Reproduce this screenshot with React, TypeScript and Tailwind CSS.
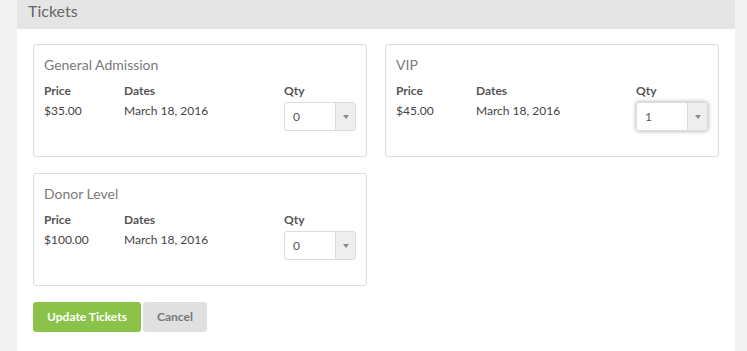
import React from "react";

type Ticket = { name: string; price: string; date: string; qty: string; focused?: boolean };

const Select = ({ value, focused }: { value: string; focused?: boolean }) => (
  <div
    className={
      "flex h-[29px] w-[72px] overflow-hidden rounded-[3px] border border-[#dcdcdc] bg-white " +
      (focused ? "shadow-[0_0_4px_rgba(0,0,0,0.35)]" : "")
    }
  >
    <div className="flex flex-1 items-center pl-[8px] pt-[1px] text-[12px] leading-4 text-[#555]">{value}</div>
    <div className="flex w-[20px] items-center justify-center border-l border-[#dcdcdc] bg-[#eeeeee]">
      <svg width="6" height="4" viewBox="0 0 6 4">
        <path d="M0 0 L6 0 L3 4 Z" fill="#8a8a8a" />
      </svg>
    </div>
  </div>
);

const Card = ({ t }: { t: Ticket }) => (
  <div className="h-[113px] rounded-[3px] border border-[#dcdcdc] bg-white px-[10px] pt-[10px]">
    <div className="text-[14px] leading-5 text-[#7a7a7a]">{t.name}</div>
    <div className="mt-[8px] grid grid-cols-[80px_1fr_72px]">
      <div>
        <div className="text-[12px] font-bold leading-4 text-[#555]">Price</div>
        <div className="mt-[2px] text-[12px] leading-5 text-[#444]">{t.price}</div>
      </div>
      <div>
        <div className="text-[12px] font-bold leading-4 text-[#555]">Dates</div>
        <div className="mt-[2px] text-[12px] leading-5 text-[#444]">{t.date}</div>
      </div>
      <div>
        <div className="text-[12px] font-bold leading-4 text-[#555]">Qty</div>
        <div className="mt-[3px]">
          <Select value={t.qty} focused={t.focused} />
        </div>
      </div>
    </div>
  </div>
);

export default function App() {
  const tickets: Ticket[] = [
    { name: "General Admission", price: "$35.00", date: "March 18, 2016", qty: "0" },
    { name: "VIP", price: "$45.00", date: "March 18, 2016", qty: "1", focused: true },
    { name: "Donor Level", price: "$100.00", date: "March 18, 2016", qty: "0" },
  ];
  return (
    <div
      className="flex h-[351px] w-[747px] overflow-hidden bg-[#f3f3f3]"
      style={{ fontFamily: "Lato, 'Open Sans', sans-serif" }}
    >
      <div className="w-[17px] shrink-0" />
      <div className="flex w-[718px] shrink-0 flex-col bg-white">
        <div className="h-[29px] bg-[#e5e5e5] pl-[11px] pt-[1px] text-[16px] leading-5 text-[#666]">
          Tickets
        </div>
        <div className="px-[16px] pt-[15px]">
          <div className="grid grid-cols-[334px_334px] gap-x-[18px] gap-y-[16px]">
            {tickets.map((t) => (
              <Card key={t.name} t={t} />
            ))}
          </div>
          <div className="mt-[16px] flex gap-[2px]">
            <button className="h-[30px] w-[108px] rounded-[3px] bg-[#8bc34a] text-[12px] font-bold text-white">
              Update Tickets
            </button>
            <button className="h-[30px] w-[64px] rounded-[3px] bg-[#e0e0e0] text-[12px] font-bold text-[#777]">
              Cancel
            </button>
          </div>
        </div>
      </div>
      <div className="flex-1" />
    </div>
  );
}
